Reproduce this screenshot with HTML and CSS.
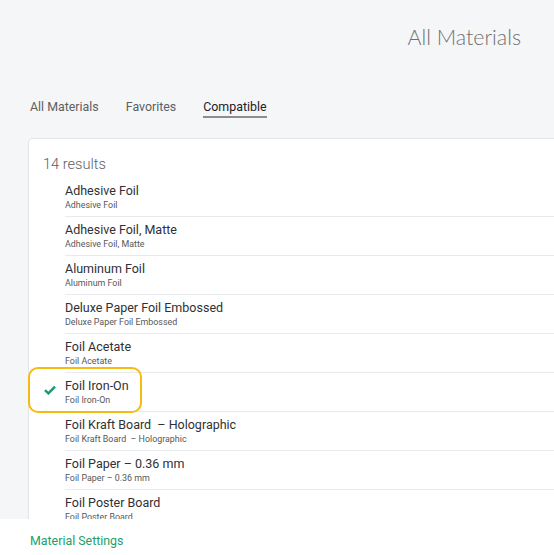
FILE: index.html
```html
<!DOCTYPE html>
<html>
<head>
<meta charset="utf-8">
<link rel="stylesheet" href="styles.css">
</head>
<body>
<main class="page">
  <header class="header">
    <h1 class="title">All Materials</h1>
  </header>
  <nav class="tabs">
    <span class="tab">All Materials</span>
    <span class="tab">Favorites</span>
    <span class="tab active">Compatible</span>
  </nav>
  <section class="card">
    <div class="count">14 results</div>
    <ul class="list">
      <li class="row"><div class="name">Adhesive Foil</div><div class="sub">Adhesive Foil</div></li>
      <li class="row"><div class="name">Adhesive Foil, Matte</div><div class="sub">Adhesive Foil, Matte</div></li>
      <li class="row"><div class="name">Aluminum Foil</div><div class="sub">Aluminum Foil</div></li>
      <li class="row"><div class="name">Deluxe Paper Foil Embossed</div><div class="sub">Deluxe Paper Foil Embossed</div></li>
      <li class="row"><div class="name">Foil Acetate</div><div class="sub">Foil Acetate</div></li>
      <li class="row selected">
        <span class="focus"></span>
        <svg class="check" viewBox="0 0 12 10" width="12" height="10"><path d="M1 5.2 L4.4 8.4 L11 1.6" fill="none" stroke="#1d9a6c" stroke-width="2.4"/></svg>
        <div class="name">Foil Iron-On</div><div class="sub">Foil Iron-On</div>
      </li>
      <li class="row"><div class="name">Foil Kraft Board &nbsp;– Holographic</div><div class="sub">Foil Kraft Board &nbsp;– Holographic</div></li>
      <li class="row"><div class="name">Foil Paper – 0.36 mm</div><div class="sub">Foil Paper – 0.36 mm</div></li>
      <li class="row"><div class="name">Foil Poster Board</div><div class="sub">Foil Poster Board</div></li>
    </ul>
  </section>
</main>
<footer class="footer">
  <span class="settings">Material Settings</span>
</footer>
</body>
</html>
```
FILE: styles.css
```css
html, body {
  margin: 0;
  padding: 0;
  height: 100%;
  overflow: hidden;
}
body {
  background: #f5f6f8;
  font-family: Roboto, "Liberation Sans", sans-serif;
  color: #333;
  display: flex;
  flex-direction: column;
}
.page {
  flex: 1;
  min-height: 0;
  overflow: hidden;
  padding-left: 29px;
}
.header {
  display: flex;
  justify-content: flex-end;
  padding: 22px 33px 0 0;
  height: 38px;
}
.title {
  margin: 0;
  font-family: Lato, "Liberation Sans", sans-serif;
  font-weight: 300;
  font-size: 21.4px;
  line-height: 30px;
  color: #6f7072;
}
.tabs {
  display: flex;
  margin-top: 39px;
  padding-left: 1px;
  height: 40px;
}
.tab {
  font-size: 12.4px;
  line-height: 16px;
  color: #5d5f62;
  margin-right: 27px;
  height: 17px;
}
.tab.active {
  color: #1f2124;
  border-bottom: 2px solid #8c8d90;
}
.card {
  background: #fff;
  border-radius: 4px 0 0 0;
  margin-right: -20px;
  box-shadow: 0 0 0 1px #e3e4e7;
  height: 600px;
}
.count {
  padding: 16px 0 0 14px;
  font-size: 14.6px;
  line-height: 18px;
  font-weight: 300;
  color: #5e6063;
  height: 23px;
}
.list {
  list-style: none;
  margin: 0;
  padding: 0 0 0 36px;
}
.row {
  position: relative;
  padding: 5px 0 5px 0;
  border-bottom: 1px solid #e9eaec;
}
.name {
  font-size: 12.5px;
  line-height: 16px;
  color: #2f3134;
}
.sub {
  font-size: 8.9px;
  line-height: 12px;
  color: #55575a;
}
.focus {
  position: absolute;
  left: -37px;
  top: -6px;
  width: 110px;
  height: 42px;
  border: 2px solid #f6bb10;
  border-radius: 10px;
}
.check {
  position: absolute;
  left: -21px;
  top: 12px;
}
.footer {
  flex: none;
  height: 36px;
  background: #fff;
  padding-left: 30px;
  display: flex;
  align-items: center;
}
.settings {
  color: #22a06b;
  font-size: 12.4px;
  line-height: 16px;
  margin-top: 8px;
}
```
